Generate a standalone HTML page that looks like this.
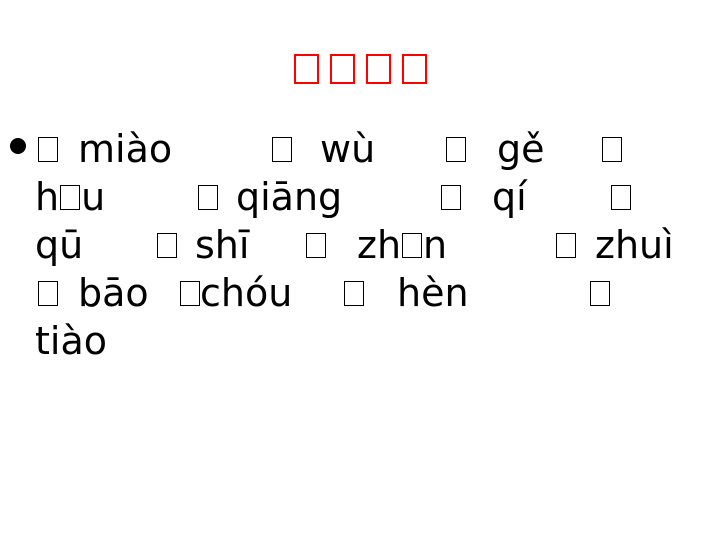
<!DOCTYPE html>
<html><head><meta charset="utf-8"><style>
html,body{margin:0;padding:0;background:#fff;}
body{width:720px;height:540px;position:relative;overflow:hidden;font-family:"DejaVu Sans","Liberation Sans",sans-serif;}
.t{position:absolute;font-size:38px;line-height:48px;color:#000;white-space:nowrap;}
.b{position:absolute;width:18px;height:23px;border:1px solid #000;}
.ib{display:inline-block;width:18px;height:23px;border:1px solid #000;vertical-align:baseline;margin:0 1px;}
.r{position:absolute;top:54px;width:21px;height:26px;border:2px solid #f00;}
.dot{position:absolute;left:10px;top:138px;width:16px;height:16px;border-radius:50%;background:#000;}
</style></head><body>
<div class="r" style="left:294px"></div>
<div class="r" style="left:330px"></div>
<div class="r" style="left:366px"></div>
<div class="r" style="left:402px"></div>
<div class="dot"></div>

<div class="b" style="left:38px;top:137px"></div>
<div class="t" style="left:78px;top:125px">miào</div>
<div class="b" style="left:272px;top:137px"></div>
<div class="t" style="left:320px;top:125px">wù</div>
<div class="b" style="left:446px;top:137px"></div>
<div class="t" style="left:497px;top:125px">gě</div>
<div class="b" style="left:602px;top:137px"></div>

<div class="t" style="left:35px;top:173px">h<span class="ib"></span>u</div>
<div class="b" style="left:198px;top:185px"></div>
<div class="t" style="left:236px;top:173px">qiāng</div>
<div class="b" style="left:441px;top:185px"></div>
<div class="t" style="left:492px;top:173px">qí</div>
<div class="b" style="left:611px;top:185px"></div>

<div class="t" style="left:35px;top:221px">qū</div>
<div class="b" style="left:157px;top:233px"></div>
<div class="t" style="left:195px;top:221px">shī</div>
<div class="b" style="left:306px;top:233px"></div>
<div class="t" style="left:357px;top:221px">zh<span class="ib"></span>n</div>
<div class="b" style="left:556px;top:233px"></div>
<div class="t" style="left:595px;top:221px">zhuì</div>

<div class="b" style="left:38px;top:281px"></div>
<div class="t" style="left:78px;top:269px">bāo</div>
<div class="b" style="left:180px;top:281px"></div>
<div class="t" style="left:200px;top:269px">chóu</div>
<div class="b" style="left:344px;top:281px"></div>
<div class="t" style="left:397px;top:269px">hèn</div>
<div class="b" style="left:590px;top:281px"></div>

<div class="t" style="left:35px;top:317px">tiào</div>
</body></html>
